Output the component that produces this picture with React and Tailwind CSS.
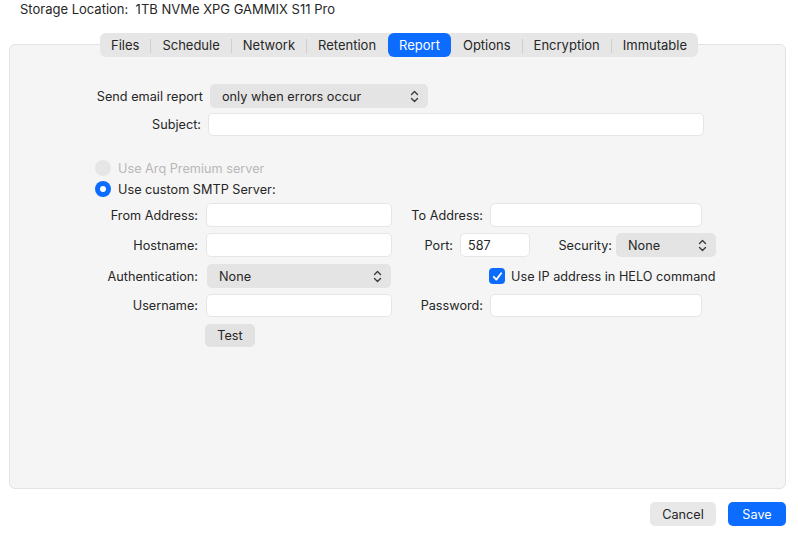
import React from 'react'

const TABS = ['Files', 'Schedule', 'Network', 'Retention', 'Report', 'Options', 'Encryption', 'Immutable']
const ACTIVE = 'Report'

function Chevrons() {
    return (
        <svg width="9" height="13" viewBox="0 0 9 13" fill="none" stroke="#3a3a3a" strokeWidth="1.4" strokeLinecap="round" strokeLinejoin="round">
            <path d="M1.5 4.5 L4.5 1.5 L7.5 4.5" />
            <path d="M1.5 8.5 L4.5 11.5 L7.5 8.5" />
        </svg>
    )
}

function Popup({ value, className }) {
    return (
        <div className={`flex items-center justify-between h-6 rounded-[5px] bg-[#e4e4e4] pl-[12px] pr-[9px] pt-[1px] ${className}`}>
            <span>{value}</span>
            <Chevrons />
        </div>
    )
}

function Field({ value, className }) {
    return (
        <div className={`flex items-center h-6 rounded-[5px] bg-white border border-[#e6e6e6] px-[7px] pt-[1px] ${className}`}>
            {value}
        </div>
    )
}

function Label({ children, className }) {
    return <div className={`text-right shrink-0 pt-[1px] ${className}`}>{children}</div>
}

export default function App() {
    return (
        <div className="w-[798px] h-[533px] bg-white text-[12.7px] text-[#262626] flex flex-col" style={{ fontFamily: 'Inter, "Liberation Sans", sans-serif' }}>
            <div className="pl-[20px] pt-[1px] h-[17px] leading-[17px] text-[13px] whitespace-pre">Storage Location:  1TB NVMe XPG GAMMIX S11 Pro</div>

            {/* tab bar sits over the panel edge */}
            <div className="flex justify-center mt-[16px] -mb-[13px] relative z-10 text-[13px]">
                <div className="flex items-center h-6 rounded-[6px] bg-[#e6e6e6] pt-[1px]">
                    {TABS.map((t, i) => {
                        const prevActive = i > 0 && TABS[i - 1] === ACTIVE
                        const sep = i > 0 && t !== ACTIVE && !prevActive
                        return (
                            <React.Fragment key={t}>
                                {sep ? <div className="w-px h-[14px] bg-[#cfcfcf]" /> : i > 0 ? <div className="w-px" /> : null}
                                {t === ACTIVE ? (
                                    <div className="h-6 -mt-[1px] pt-[1px] px-[11px] rounded-[6px] bg-[#0b6cff] text-white flex items-center">{t}</div>
                                ) : (
                                    <div className="h-6 px-[11px] flex items-center">{t}</div>
                                )}
                            </React.Fragment>
                        )
                    })}
                </div>
            </div>

            <div className="ml-[9px] w-[777px] h-[445px] bg-[#f5f5f5] border border-[#e3e3e3] rounded-[6px] pt-[39px]">
                <div className="flex items-center gap-[7px]">
                    <Label className="w-[193px]">Send email report</Label>
                    <Popup value="only when errors occur" className="w-[218px]" />
                </div>
                <div className="flex items-center gap-[7px] mt-[5px]">
                    <Label className="w-[191px]">Subject:</Label>
                    <Field className="w-[496px] h-[23px]" />
                </div>

                <div className="pl-[85px] mt-[24px] flex flex-col gap-[5px]">
                    <div className="flex items-center gap-[7px] h-4 text-[#b8b8b8]">
                        <div className="w-4 h-4 rounded-full bg-[#e6e6e6]" />
                        <span className="pt-[1px]">Use Arq Premium server</span>
                    </div>
                    <div className="flex items-center gap-[7px] h-4">
                        <div className="w-4 h-4 rounded-full bg-[#0b6cff] flex items-center justify-center">
                            <div className="w-[6px] h-[6px] rounded-full bg-white" />
                        </div>
                        <span className="pt-[1px]">Use custom SMTP Server:</span>
                    </div>
                </div>

                <div className="mt-[6px] flex flex-col gap-[6px]">
                    <div className="flex items-center">
                        <Label className="w-[188px]">From Address:</Label>
                        <Field className="ml-[8px] w-[186px]" />
                        <Label className="w-[91px]">To Address:</Label>
                        <Field className="ml-[7px] w-[212px]" />
                    </div>
                    <div className="flex items-center">
                        <Label className="w-[188px]">Hostname:</Label>
                        <Field className="ml-[8px] w-[186px]" />
                        <Label className="w-[61px]">Port:</Label>
                        <Field value="587" className="ml-[7px] w-[70px]" />
                        <Label className="w-[82px]">Security:</Label>
                        <Popup value="None" className="ml-[4px] w-[100px]" />
                    </div>
                    <div className="flex items-center mt-[1px]">
                        <Label className="w-[188px]">Authentication:</Label>
                        <Popup value="None" className="ml-[9px] w-[184px]" />
                        <div className="ml-[98px] w-4 h-4 rounded-[4px] bg-[#0b6cff] flex items-center justify-center">
                            <svg width="11" height="11" viewBox="0 0 11 11" fill="none" stroke="white" strokeWidth="1.8" strokeLinecap="round" strokeLinejoin="round">
                                <path d="M1.8 5.8 L4.3 8.6 L9.2 2.2" />
                            </svg>
                        </div>
                        <span className="ml-[6px] pt-[1px]">Use IP address in HELO command</span>
                    </div>
                    <div className="flex items-center">
                        <Label className="w-[188px]">Username:</Label>
                        <Field className="ml-[8px] w-[186px] h-[23px]" />
                        <Label className="w-[91px]">Password:</Label>
                        <Field className="ml-[7px] w-[212px] h-[23px]" />
                    </div>
                    <div className="pl-[195px] mt-[1px]">
                        <div className="w-[50px] h-[23px] pt-[1px] rounded-[5px] bg-[#e2e2e2] flex items-center justify-center">Test</div>
                    </div>
                </div>
            </div>

            <div className="flex justify-end gap-[12px] pr-[12px] mt-[13px]">
                <div className="w-[66px] h-6 pt-[1px] rounded-[5px] bg-[#e8e8e8] flex items-center justify-center">Cancel</div>
                <div className="w-[58px] h-6 pt-[1px] rounded-[5px] bg-[#0b6cff] text-white flex items-center justify-center">Save</div>
            </div>
        </div>
    )
}
